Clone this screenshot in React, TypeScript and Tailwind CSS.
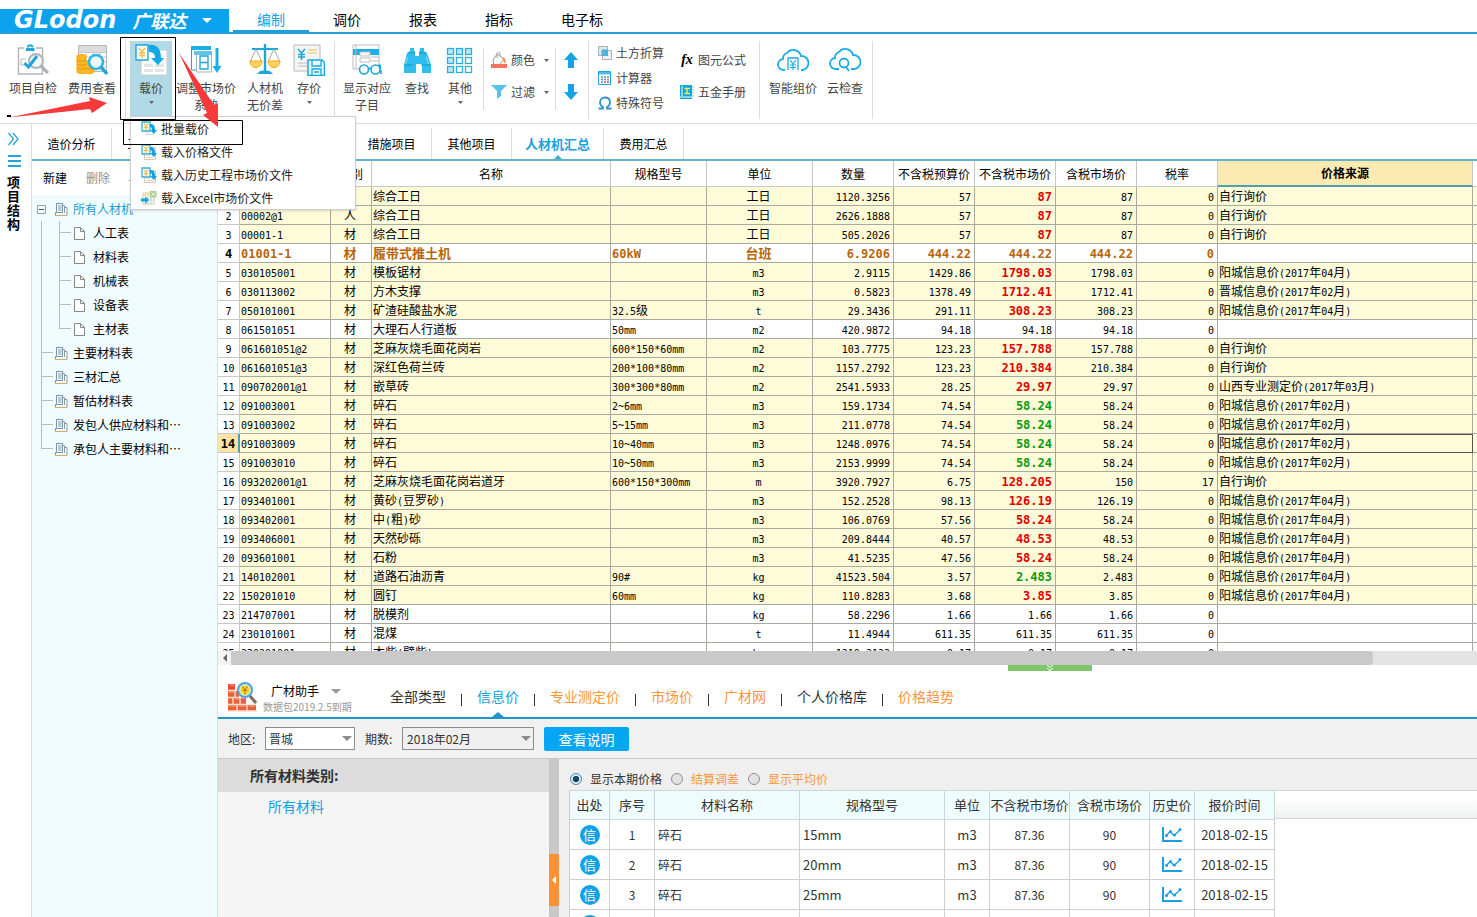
import { useState, type ReactNode } from 'react';
import clsx from 'clsx';

const MAIN_TABS = ['编制', '调价', '报表', '指标', '电子标'];

const PAGE_TABS = ['造价分析', '工程概况', '取费设置', '分部分项', '措施项目', '其他项目', '人材机汇总', '费用汇总'];

const MENU_ITEMS = ['批量载价', '载入价格文件', '载入历史工程市场价文件', '载入Excel市场价文件'];

const TREE_CHILDREN = ['人工表', '材料表', '机械表', '设备表', '主材表'];
const TREE_NODES = ['主要材料表', '三材汇总', '暂估材料表', '发包人供应材料和…', '承包人主要材料和…'];

type Trend = 'up' | 'down' | '';

type Material = {
  code: string;
  kind: string;
  name: string;
  spec: string;
  unit: string;
  qty: string;
  budget: string;
  market: string;
  trend: Trend;
  taxed: string;
  rate: string;
  source: string;
};

function row(
  code: string,
  kind: string,
  name: string,
  spec: string,
  unit: string,
  qty: string,
  budget: string,
  market: string,
  trend: Trend,
  source: string,
  taxed = market,
  rate = '0',
): Material {
  return { code, kind, name, spec, unit, qty, budget, market, trend, taxed, rate, source };
}

const YC4 = '阳城信息价(2017年04月)';
const YC2 = '阳城信息价(2017年02月)';
const SELF = '自行询价';

const MATERIALS: Material[] = [
  row('00001', '人', '综合工日', '', '工日', '1120.3256', '57', '87', 'up', SELF),
  row('00002@1', '人', '综合工日', '', '工日', '2626.1888', '57', '87', 'up', SELF),
  row('00001-1', '材', '综合工日', '', '工日', '505.2026', '57', '87', 'up', SELF),
  row('01001-1', '材', '履带式推土机', '60kW', '台班', '6.9206', '444.22', '444.22', '', ''),
  row('030105001', '材', '模板锯材', '', 'm3', '2.9115', '1429.86', '1798.03', 'up', YC4),
  row('030113002', '材', '方木支撑', '', 'm3', '0.5823', '1378.49', '1712.41', 'up', '晋城信息价(2017年02月)'),
  row('050101001', '材', '矿渣硅酸盐水泥', '32.5级', 't', '29.3436', '291.11', '308.23', 'up', YC4),
  row('061501051', '材', '大理石人行道板', '50mm', 'm2', '420.9872', '94.18', '94.18', '', ''),
  row('061601051@2', '材', '芝麻灰烧毛面花岗岩', '600*150*60mm', 'm2', '103.7775', '123.23', '157.788', 'up', SELF),
  row('061601051@3', '材', '深红色荷兰砖', '200*100*80mm', 'm2', '1157.2792', '123.23', '210.384', 'up', SELF),
  row('090702001@1', '材', '嵌草砖', '300*300*80mm', 'm2', '2541.5933', '28.25', '29.97', 'up', '山西专业测定价(2017年03月)'),
  row('091003001', '材', '碎石', '2~6mm', 'm3', '159.1734', '74.54', '58.24', 'down', YC2),
  row('091003002', '材', '碎石', '5~15mm', 'm3', '211.0778', '74.54', '58.24', 'down', YC2),
  row('091003009', '材', '碎石', '10~40mm', 'm3', '1248.0976', '74.54', '58.24', 'down', YC2),
  row('091003010', '材', '碎石', '10~50mm', 'm3', '2153.9999', '74.54', '58.24', 'down', YC2),
  row('093202001@1', '材', '芝麻灰烧毛面花岗岩道牙', '600*150*300mm', 'm', '3920.7927', '6.75', '128.205', 'up', SELF, '150', '17'),
  row('093401001', '材', '黄砂(豆罗砂)', '', 'm3', '152.2528', '98.13', '126.19', 'up', YC4),
  row('093402001', '材', '中(粗)砂', '', 'm3', '106.0769', '57.56', '58.24', 'up', YC4),
  row('093406001', '材', '天然砂砾', '', 'm3', '209.8444', '40.57', '48.53', 'up', YC4),
  row('093601001', '材', '石粉', '', 'm3', '41.5235', '47.56', '58.24', 'up', YC4),
  row('140102001', '材', '道路石油沥青', '90#', 'kg', '41523.504', '3.57', '2.483', 'down', YC4),
  row('150201010', '材', '圆钉', '60mm', 'kg', '110.8283', '3.68', '3.85', 'up', YC4),
  row('214707001', '材', '脱模剂', '', 'kg', '58.2296', '1.66', '1.66', '', ''),
  row('230101001', '材', '混煤', '', 't', '11.4944', '611.35', '611.35', '', ''),
  row('230201001', '材', '木柴(劈柴)', '', 'kg', '1210.2122', '0.17', '0.17', '', ''),
];

const SELECTED_ROW = 14;
const HIGHLIGHT_ROW = 4;

const HELPER_TABS = [
  { label: '全部类型', tone: 'text-[#333]' },
  { label: '信息价', tone: 'text-[#12a0e4]' },
  { label: '专业测定价', tone: 'text-[#fb963c]' },
  { label: '市场价', tone: 'text-[#fb963c]' },
  { label: '广材网', tone: 'text-[#fb963c]' },
  { label: '个人价格库', tone: 'text-[#333]' },
  { label: '价格趋势', tone: 'text-[#fb963c]' },
];

const PRICE_MODES = ['显示本期价格', '结算调差', '显示平均价'];
const QUOTES = ['15mm', '20mm', '25mm', '30mm'];

/* ---------- icons ---------- */

function IconCheckClipboard() {
  return (
    <svg width="32" height="32" viewBox="0 0 32 32" fill="none">
      <path d="M7 4H1.500v26h24V4H19" stroke="#b5b5b5" strokeWidth="1.400" />
      <path d="M9 6h8.500M11 3.500a2.200 2.200 0 0 1 4.400 0" stroke="#1ba7dc" strokeWidth="2" />
      <path d="M9 4.500h8.500" stroke="#1ba7dc" />
      <path d="M9 15H4v6h5" stroke="#b5b5b5" />
      <circle cx="19" cy="17" r="7" fill="#f3f7f8" stroke="#b0b4b8" strokeWidth="2" />
      <path d="M24 22l7 7" stroke="#b0b4b8" strokeWidth="3.200" />
      <path d="M7.500 19l4 4L20 12" stroke="#1ba7dc" strokeWidth="3" />
    </svg>
  );
}

function IconCostView() {
  return (
    <svg width="32" height="32" viewBox="0 0 32 32" fill="none">
      <path d="M2.500 1.500h28v26h-28z" fill="#fff" stroke="#b8b8b8" />
      <path d="M3 2h27v6H3z" fill="#dcdcdc" />
      <path d="M3 8.500h27M3 13h27M3 18h27M3 23h27M10 8v20M17 8v20M24 8v20" stroke="#c6c6c6" />
      <path d="M1 12c0-2 9-2 9 0v6c0-2 8-1 8 1v9c0 2-8 2-8 1 0 1-9 1-9-1z" fill="#fdb722" stroke="#f5a60a" />
      <path d="M1 16c2 1.500 7 1.500 9 0M1 20c2 1.500 7 1.500 9 0M1 24c2 1.500 7 1.500 9 0M10 24c2 1.500 6 1.500 8 0" stroke="#e8940a" />
      <circle cx="20" cy="18" r="7" fill="#e9f8fd" stroke="#2fb4e6" strokeWidth="2.600" />
      <path d="M25 23l6 7" stroke="#1ba7dc" strokeWidth="3.400" />
    </svg>
  );
}

function IconLoadPrice() {
  return (
    <svg width="32" height="32" viewBox="0 0 32 32" fill="none">
      <path d="M6 6h26v25H6z" fill="#fff" stroke="#c3ccd0" />
      <path d="M9 20h9v3H9zM20 20h9v3h-9zM9 25h9v3H9zM20 25h9v3h-9z" fill="#e4e4e4" />
      <path d="M1 1h12v15H1z" fill="#f8fcfd" stroke="#1ba7dc" strokeWidth="1.400" />
      <path d="M4 4l3 4 3-4M7 8v6M4 9h6M4 11.500h6" stroke="#f9b950" strokeWidth="1.400" />
      <path d="M14 1c8-1 12 4 12 13h3l-6 7-7-7h4c0-4-2-6-6-6z" fill="#12a8e6" />
    </svg>
  );
}

function IconLoadSmall({ framed }: { framed: boolean }) {
  return (
    <svg width="16" height="16" viewBox="0 0 16 16" fill="none">
      {framed ? <path d="M3.500 3.500h11v12h-11z" fill="#fff" stroke="#d9c6a4" /> : null}
      <path d="M5 11h4M5 13.500h8" stroke="#c9d4d8" />
      <path d="M1 1h8v9H1z" fill="#fbf6dc" stroke="#39aedb" strokeWidth="1.300" />
      <path d="M3 3l2 2 2-2M5 5v4M3 6.500h4" stroke="#e8b64a" />
      <path d="M9 3c4 0 5 2 5 6h2l-3 4-4-4h2c0-2-.5-3-2-3z" fill="#12a0dc" />
    </svg>
  );
}

function IconAdjust() {
  return (
    <svg width="32" height="32" viewBox="0 0 32 32" fill="none">
      <path d="M1 2h20v4H1z" fill="#1bb0e4" />
      <path d="M1.500 6v20H6" stroke="#1ba7dc" />
      <path d="M4 7h18v4H4z" fill="#5cc6ea" />
      <path d="M6.500 11v17h15V11" fill="#fff" stroke="#a9b4b8" />
      <path d="M10 12h8v13h-8zM10 18.500h8" stroke="#1ba7dc" strokeWidth="1.300" />
      <path d="M25.500 4h3v18h3L27 29l-4.500-7h3z" fill="#1bb0e4" />
    </svg>
  );
}

function IconScale() {
  return (
    <svg width="32" height="32" viewBox="0 0 32 32" fill="none">
      <path d="M3 5h26" stroke="#1ba7dc" strokeWidth="2" />
      <path d="M16 0v27" stroke="#1ba7dc" strokeWidth="2.400" />
      <path d="M10 28c1-2 11-2 12 0l2 2H8z" fill="#1ba7dc" />
      <path d="M7 5L1 18h12zM25 5l-6 13h12z" stroke="#a8a8a8" />
      <path d="M1 17h12c0 4-3 6.500-6 6.500S1 21 1 17zM19 17h12c0 4-3 6.500-6 6.500S19 21 19 17z" fill="#fdd263" stroke="#f5a60a" />
    </svg>
  );
}

function IconSavePrice() {
  return (
    <svg width="32" height="32" viewBox="0 0 32 32" fill="none">
      <path d="M1 1h26v26H1z" fill="#f5f5f5" stroke="#b8b8b8" />
      <path d="M5 5l3.500 4L12 5M8.500 9v7M5 10.500h7M5 13h7" stroke="#1ba7dc" strokeWidth="1.500" />
      <path d="M15 6h9M15 9h9" stroke="#f0d9a0" strokeWidth="2" />
      <path d="M5 19h9M5 22h9" stroke="#d0d0d0" strokeWidth="1.500" />
      <path d="M15 16h14l2.500 2.500V31.500H15z" fill="#e9f8fd" stroke="#1ba7dc" strokeWidth="1.500" />
      <path d="M19 16v6h9v-6M19 31v-6h9v6M21 28h5" stroke="#1ba7dc" strokeWidth="1.300" />
    </svg>
  );
}

function IconShowItems() {
  return (
    <svg width="32" height="32" viewBox="0 0 32 32" fill="none">
      <path d="M2 1h26v24H2z" fill="#fff" stroke="#bdbdbd" />
      <path d="M2 5h26v6H2z" fill="#1bb0e4" />
      <path d="M5 1v24M9 8h10v4H9zM9 14h10v4H9zM20 13h8M20 17h8" stroke="#bdbdbd" fill="#fff" />
      <circle cx="13" cy="25.500" r="4.500" fill="#fff" stroke="#1ba7dc" strokeWidth="1.600" />
      <circle cx="24.500" cy="25.500" r="4.500" fill="#fff" stroke="#1ba7dc" strokeWidth="1.600" />
      <path d="M17.500 25c.5-1 2-1 2.500 0M29 25c1-3 0-4-1-5M30 26v4" stroke="#1ba7dc" strokeWidth="1.500" />
    </svg>
  );
}

function IconBinoculars() {
  return (
    <svg width="32" height="32" viewBox="0 0 32 32" fill="#2fbdee">
      <path d="M9 4h4v3h1v5h4V7h1V4h4v3l3 2 4 12v8h-9v-9h-6v9H3v-8L6 9l3-2z" />
      <path d="M7 9h7M18 9h7M3 21h9M20 21h10" stroke="#1597cc" />
      <path d="M7 13l-2.500 7M25 13l2.500 7" stroke="#8fdcf5" />
    </svg>
  );
}

function IconGridDots() {
  const at = [4, 13, 22];
  return (
    <svg width="32" height="32" viewBox="0 0 32 32">
      {at.map((y, r) =>
        at.map((x, c) => (
          <rect
            key={`${x}-${y}`}
            x={x - 0.5}
            y={y + 0.5}
            width="6"
            height="6"
            fill={r === 0 || c === 0 ? '#bde6f5' : '#fff'}
            stroke="#2aaede"
            strokeWidth="1.300"
          />
        )),
      )}
    </svg>
  );
}

function IconCloud({ kind }: { kind: 'price' | 'search' }) {
  return (
    <svg width="32" height="32" viewBox="0 0 32 32" fill="none" stroke="#19abe6" strokeWidth="1.800">
      {kind === 'price' ? (
        <>
          <path d="M8 26H7a5.500 5.500 0 0 1-1-11 6 6 0 0 1 4-6 8 8 0 0 1 14 3 7 7 0 0 1 1 14h-1" />
          <path d="M11 26V14h10v12" strokeWidth="1.300" />
          <path d="M13 16l3 4 3-4M16 20v6M13 21h6M13 23.500h6" strokeWidth="1.200" />
        </>
      ) : (
        <>
          <path d="M10 25H7A5.500 5.500 0 0 1 6 14a6 6 0 0 1 4-6 8 8 0 0 1 14 3 7 7 0 0 1 1 14h-3" />
          <circle cx="15" cy="19" r="4.500" />
          <path d="M17 23l3 4" />
        </>
      )}
    </svg>
  );
}

function IconBucket() {
  return (
    <svg width="16" height="16" viewBox="0 0 16 16" fill="none">
      <path d="M6 2l7 5-5 6H3L2 8z" fill="#fff" stroke="#9a9a9a" />
      <path d="M6 6V1.500a1.500 1.500 0 0 1 3 0V4" stroke="#9a9a9a" />
      <path d="M11 5c4 1 4 4 3 7-1-2-2-4-3-7z" fill="#f58a3c" />
      <path d="M0 12h16v4H0z" fill="#f4735a" />
    </svg>
  );
}

function IconFunnel() {
  return (
    <svg width="16" height="16" viewBox="0 0 16 16">
      <path d="M0 1h16l-6 6v5l-4 3V7z" fill="#55c3ea" />
    </svg>
  );
}

function IconMove({ down = false }: { down?: boolean }) {
  return (
    <svg width="16" height="16" viewBox="0 0 16 16" className={clsx(down && 'rotate-180')}>
      <path d="M8 0l7 8h-4v8H5V8H1z" fill="#12a5e6" />
    </svg>
  );
}

function IconEarthwork() {
  return (
    <svg width="14" height="14" viewBox="0 0 14 14" fill="none">
      <path d="M.5.500h9v9h-9z" fill="#dfe7ea" stroke="#a9b4b8" />
      <path d="M4.500 4.500h9v9h-9z" fill="#eef3f4" stroke="#a9b4b8" />
      <path d="M3.500 3.500h6.500v6.500H3.500z" fill="#49b4de" />
    </svg>
  );
}

function IconCalculator() {
  return (
    <svg width="14" height="14" viewBox="0 0 14 14" fill="none">
      <path d="M.5.500h12v13H.5z" fill="#fff" stroke="#1ba7dc" />
      <path d="M1 1h11v2.500H1z" fill="#4fbfe8" />
      <path d="M3 6h2M6 6h2M9 6h2M3 8.500h2M6 8.500h2M9 8.500h2M3 11h2M6 11h2M9 11h2" stroke="#5a8ab4" strokeWidth="1.300" />
      <path d="M9 8.500h2M6 11h2" stroke="#f08a70" strokeWidth="1.300" />
    </svg>
  );
}

function IconOmega() {
  return (
    <svg width="14" height="14" viewBox="0 0 14 14" fill="none" stroke="#2f93cf" strokeWidth="1.800">
      <path d="M.5 12.500H5V11C3 10 2 8.500 2 6.500 2 3.500 4 1.500 7 1.500s5 2 5 5c0 2-1 3.500-3 4.500v1.500h4.500" />
    </svg>
  );
}

function IconManual() {
  return (
    <svg width="14" height="14" viewBox="0 0 14 14" fill="none">
      <path d="M0 0h12v14H0z" fill="#0fa6d8" />
      <path d="M2 1v10M0 12h12" stroke="#fff" />
      <path d="M4.500 3.500h5.500M4.500 8.500h5.500M7 3.500v5" stroke="#f3ee5a" strokeWidth="1.400" />
      <path d="M13 1v12" stroke="#7bcbe6" strokeDasharray="2 1" />
    </svg>
  );
}

function IconExcel() {
  return (
    <svg width="16" height="16" viewBox="0 0 32 32" fill="none">
      <path d="M4 6h22v22H4z" fill="#fff" stroke="#d2c9a8" strokeWidth="2" />
      <path d="M4 6h22v6H4z" fill="#f2e2b8" />
      <path d="M14 12v16M20 12v16M4 20h22" stroke="#c3ccd0" strokeWidth="2" />
      <path d="M18 2h13v13H18z" fill="#a8d08c" />
      <path d="M21 5l7 7M28 5l-7 7" stroke="#fff" strokeWidth="2" />
      <path d="M0 17h8v-5l8 8-8 8v-5H0z" fill="#12a8e0" />
    </svg>
  );
}

function IconSheets() {
  return (
    <svg width="13" height="13" viewBox="0 0 13 13" fill="none">
      <path d="M1.500.500h6v9h-6z" fill="#f6fdff" stroke="#6f93a8" />
      <path d="M3 3h3.500M3 5h3.500M3 7h3.500" stroke="#7795a6" />
      <path d="M8 2.500h1.500V10M10 4.500h2v8H.5V9" stroke="#8a9aa2" />
      <path d="M1 12.500h11" stroke="#d9a86a" />
    </svg>
  );
}

function IconFile() {
  return (
    <svg width="11" height="13" viewBox="0 0 11 13" fill="none" stroke="#868686">
      <path d="M.5.500h6l4 4v8H.5zM6.500.500v4h4" fill="#fff" />
    </svg>
  );
}

function IconBricks() {
  return (
    <svg width="31" height="30" viewBox="0 0 31 30" fill="none">
      <path d="M1 2h7v27H1z" fill="#e2502e" />
      <path d="M1 9h11v7h7v6h10v7H1z" fill="#e9603a" />
      <path d="M1 8.500h7M1 15.500h17M1 22.500h28M8 9v6M13 16v6M6 16v6M10 23v6M20 23v6M1 29h29" stroke="#fbe0cf" strokeWidth="1.400" />
      <path d="M2 3h5M2 10h5M8 17h4M2 24h7M12 24h7M22 24h6" stroke="#f9a27e" />
      <path d="M23 14l6 7" stroke="#7d6a5c" strokeWidth="3" />
      <circle cx="18" cy="8" r="7" fill="#d9ecc0" stroke="#4aa7d8" strokeWidth="2" />
      <circle cx="18" cy="8" r="4.500" fill="#fcd530" />
      <path d="M15.500 4.500l2.500 3.500 2.500-3.500M18 8v4.500M15.500 8.500h5" stroke="#b58410" strokeWidth="1.200" />
    </svg>
  );
}

function IconTrend() {
  return (
    <svg width="20" height="15" viewBox="0 0 20 15" fill="none" stroke="#1c9fe0">
      <path d="M1 0v14h19" strokeWidth="2" />
      <path d="M4 9l4-4.500 4 4 6-5.500" strokeWidth="1.300" />
      <g fill="#1c9fe0" stroke="none">
        <circle cx="4.500" cy="8.500" r="1.500" />
        <circle cx="8.500" cy="4.500" r="1.500" />
        <circle cx="12.500" cy="8" r="1.500" />
        <circle cx="18" cy="2.500" r="1.500" />
      </g>
    </svg>
  );
}

function Caret({ className = 'text-[#666]', wide = false }: { className?: string; wide?: boolean }) {
  return (
    <svg width={wide ? 10 : 5} height={wide ? 5 : 3} viewBox="0 0 10 5" preserveAspectRatio="none" className={className}>
      <path d="M0 0h10L5 5z" fill="currentColor" />
    </svg>
  );
}

/* ---------- toolbar ---------- */

function Divider({ className }: { className?: string }) {
  return <div className={clsx('w-px shrink-0 bg-[#dcdcdc]', className)} />;
}

function ToolButton({
  icon,
  lines,
  width,
  caret = false,
  active = false,
}: {
  icon: ReactNode;
  lines: string[];
  width: string;
  caret?: boolean;
  active?: boolean;
}) {
  return (
    <button
      type="button"
      className={clsx(
        'flex h-[75px] shrink-0 flex-col items-center pt-[3px] text-xs leading-[17px] text-[#444]',
        width,
        active && 'bg-[#b1dae6]',
      )}
    >
      {icon}
      <span className="mt-[3px] flex flex-col items-center whitespace-nowrap">
        {lines.map((line) => (
          <span key={line}>{line}</span>
        ))}
      </span>
      {caret ? <Caret className="mt-[5px] shrink-0 text-[#666]" /> : null}
    </button>
  );
}

function SmallTool({ icon, label }: { icon: ReactNode; label: string }) {
  return (
    <button type="button" className="flex items-center gap-1 text-xs whitespace-nowrap text-[#444]">
      {icon}
      {label}
    </button>
  );
}

function LoadMenu() {
  return (
    <ul className="absolute top-full left-0 z-20 w-[226px] border border-[#cfcfcf] bg-white shadow-sm">
      {MENU_ITEMS.map((item, i) => (
        <li key={item}>
          <button type="button" className="flex h-[23px] w-full items-center gap-1 pl-[10px] text-left text-xs text-[#222]">
            {i === 3 ? <IconExcel /> : <IconLoadSmall framed={i > 0} />}
            {item}
          </button>
        </li>
      ))}
    </ul>
  );
}

function Toolbar() {
  return (
    <div className="flex h-[90px] shrink-0 items-start border-b border-[#dcdcdc] pt-[7px] pl-1">
      <ToolButton icon={<IconCheckClipboard />} lines={['项目自检']} width="w-[58px]" />
      <ToolButton icon={<IconCostView />} lines={['费用查看']} width="w-[60px]" />
      <Divider className="mr-1 ml-[3px] h-[78px]" />
      <div className="relative">
        <ToolButton icon={<IconLoadPrice />} lines={['载价']} width="w-[42px]" caret active />
        <LoadMenu />
      </div>
      <ToolButton icon={<IconAdjust />} lines={['调整市场价', '系数']} width="w-[68px]" />
      <ToolButton icon={<IconScale />} lines={['人材机', '无价差']} width="w-[50px]" />
      <ToolButton icon={<IconSavePrice />} lines={['存价']} width="w-[38px]" caret />
      <Divider className="mx-[6px] h-[78px]" />
      <ToolButton icon={<IconShowItems />} lines={['显示对应', '子目']} width="w-[52px]" />
      <ToolButton icon={<IconBinoculars />} lines={['查找']} width="w-[48px]" />
      <ToolButton icon={<IconGridDots />} lines={['其他']} width="w-[38px]" caret />
      <Divider className="mt-[7px] ml-1 h-[62px]" />
      <div className="flex flex-col gap-4 pt-[11px] pr-[6px] pl-[7px]">
        <div className="flex items-center gap-[9px]">
          <SmallTool icon={<IconBucket />} label="颜色" />
          <Caret />
        </div>
        <div className="flex items-center gap-[9px]">
          <SmallTool icon={<IconFunnel />} label="过滤" />
          <Caret />
        </div>
      </div>
      <Divider className="mt-[7px] h-[62px]" />
      <div className="flex flex-col gap-4 pt-[11px] pr-[9px] pl-[7px]">
        <button type="button" aria-label="上移">
          <IconMove />
        </button>
        <button type="button" aria-label="下移">
          <IconMove down />
        </button>
      </div>
      <Divider className="h-[78px]" />
      <div className="flex flex-col gap-[9px] pt-1 pl-[9px]">
        <SmallTool icon={<IconEarthwork />} label="土方折算" />
        <SmallTool icon={<IconCalculator />} label="计算器" />
        <SmallTool icon={<IconOmega />} label="特殊符号" />
      </div>
      <div className="flex flex-col gap-4 pt-[11px] pr-[13px] pl-4">
        <SmallTool
          icon={<span className="w-[14px] font-['Liberation_Serif'] text-sm leading-4 font-bold text-black italic">fx</span>}
          label="图元公式"
        />
        <SmallTool icon={<IconManual />} label="五金手册" />
      </div>
      <Divider className="mr-[5px] h-[78px]" />
      <ToolButton icon={<IconCloud kind="price" />} lines={['智能组价']} width="w-[56px]" />
      <ToolButton icon={<IconCloud kind="search" />} lines={['云检查']} width="w-[48px]" />
      <Divider className="ml-[3px] h-[78px]" />
    </div>
  );
}

function TitleBar() {
  return (
    <header className="flex h-[34px] shrink-0 items-end border-b-2 border-[#1f9fd9]">
      <div className="flex h-[23px] w-[229px] items-center bg-[#0ca2ee] pl-[14px] text-white">
        <span className="font-['DejaVu_Sans'] text-2xl leading-[23px] font-bold italic">GLodon</span>
        <span className="ml-4 text-lg leading-[23px] font-bold italic">广联达</span>
        <Caret className="ml-4 text-white" wide />
      </div>
      <nav className="flex pl-1">
        {MAIN_TABS.map((tab, i) => (
          <button
            key={tab}
            type="button"
            className={clsx(
              'h-6 border-b-2 px-6 text-sm leading-5 whitespace-nowrap',
              i === 0 ? 'border-[#1f9fd9] text-[#12a0e4]' : 'border-transparent text-black',
            )}
          >
            {tab}
          </button>
        ))}
      </nav>
    </header>
  );
}

/* ---------- left side ---------- */

function Rail() {
  return (
    <aside className="flex w-8 shrink-0 flex-col items-start border-r border-[#dcdcdc] pt-2 pl-[7px]">
      <svg width="14" height="14" viewBox="0 0 14 14" fill="none" stroke="#2ba3d4" strokeWidth="1.300">
        <path d="M1.500 1l5 6-5 6M6 1l5 6-5 6" />
      </svg>
      <svg width="14" height="12" viewBox="0 0 14 12" className="mt-[9px] ml-px" stroke="#2ba3d4" strokeWidth="2">
        <path d="M0 1h13M0 6h13M0 11h13" />
      </svg>
      <div className="mt-2 w-[13px] text-[13px] leading-[14px] font-bold text-black">项目结构</div>
    </aside>
  );
}

function Branch({ last }: { last: boolean }) {
  return (
    <span className="flex h-6 w-3 shrink-0 flex-col">
      <span className="h-3 border-b border-l border-[#b4bcbe]" />
      <span className={clsx('h-3', !last && 'border-l border-[#b4bcbe]')} />
    </span>
  );
}

function Tree() {
  return (
    <aside className="flex w-[186px] shrink-0 flex-col border-r border-[#d5e0e2]">
      <div className="flex h-[34px] shrink-0 items-center gap-[19px] pl-[11px] text-xs">
        <button type="button">新建</button>
        <button type="button" className="text-[#909090]">
          删除
        </button>
        <svg width="10" height="6" viewBox="0 0 10 6" fill="none" stroke="#909090">
          <path d="M0 6l5-5 5 5" />
        </svg>
      </div>
      <ul className="flex-1 bg-[#f0fcfe] pt-[2px] text-xs text-black">
        <li>
          <div className="flex h-6 items-center pl-[5px]">
            <svg width="9" height="9" viewBox="0 0 9 9" fill="none">
              <path d="M.5.500h8v8h-8z" stroke="#8fa3aa" />
              <path d="M2 4.500h5" stroke="#555" />
            </svg>
            <span className="mr-[5px] ml-[9px]">
              <IconSheets />
            </span>
            <a href="#all" className="text-[#1b9bd0]">
              所有人材机
            </a>
          </div>
          <ul>
            {TREE_CHILDREN.map((name, i) => (
              <li key={name} className="ml-[9px] flex h-6 items-center">
                <span className="h-6 w-[18px] border-l border-[#b4bcbe]" />
                <Branch last={i === TREE_CHILDREN.length - 1} />
                <span className="mr-2 ml-[3px]">
                  <IconFile />
                </span>
                <a href="#kind">{name}</a>
              </li>
            ))}
          </ul>
        </li>
        {TREE_NODES.map((name, i) => (
          <li key={name} className="ml-[9px] flex h-6 items-center">
            <Branch last={i === TREE_NODES.length - 1} />
            <span className="mr-[5px] ml-[2px]">
              <IconSheets />
            </span>
            <a href="#node">{name}</a>
          </li>
        ))}
      </ul>
    </aside>
  );
}

function PageTabs() {
  return (
    <nav className="flex h-[37px] shrink-0 items-end border-b-2 border-[#5fb4c6]">
      {PAGE_TABS.map((tab) => {
        const active = tab === '人材机汇总';
        return (
          <button
            key={tab}
            type="button"
            className={clsx(
              'relative h-[31px] border-r border-[#dcdcdc] whitespace-nowrap',
              active ? 'w-[92px] text-[13px] font-bold text-[#1ba3dc]' : 'w-20 text-xs text-black',
            )}
          >
            {tab}
            {active ? (
              <svg width="8" height="4" viewBox="0 0 8 4" className="absolute bottom-0 left-[42px]">
                <path d="M0 4l4-4 4 4z" fill="#3fb0d4" />
              </svg>
            ) : null}
          </button>
        );
      })}
    </nav>
  );
}

/* ---------- material grid ---------- */

// Latin runs are set in the half-width mono face next to full-width hanzi
function GridText({ text, bold = false }: { text: string; bold?: boolean }) {
  const runs = text.split(/([\x20-\x7e]+)/).filter(Boolean);
  return (
    <>
      {runs.map((run, i) =>
        /^[\x20-\x7e]+$/.test(run) ? (
          <span
            key={i}
            className={clsx("font-['DejaVu_Sans_Mono'] leading-none", bold ? 'text-[12px] font-bold' : 'text-[10px]')}
          >
            {run}
          </span>
        ) : (
          <span key={i} className={clsx('leading-none', bold && 'text-[13px] font-bold')}>
            {run}
          </span>
        ),
      )}
    </>
  );
}

const GRID_HEADS = ['', '编码', '类别', '名称', '规格型号', '单位', '数量', '不含税预算价', '不含税市场价', '含税市场价', '税率', '价格来源'];

function MaterialGrid() {
  return (
    <div className="min-h-0 flex-1 overflow-hidden">
      <table className="w-full table-fixed border-separate border-spacing-0 text-xs leading-[18px] text-black">
        <colgroup>
          <col className="w-[22px]" />
          <col className="w-[91px]" />
          <col className="w-[41px]" />
          <col className="w-[239px]" />
          <col className="w-[96px]" />
          <col className="w-[106px]" />
          <col className="w-[81px]" />
          <col className="w-[81px]" />
          <col className="w-[81px]" />
          <col className="w-[81px]" />
          <col className="w-[81px]" />
          <col className="w-[255px]" />
          <col />
        </colgroup>
        <thead>
          <tr>
            {GRID_HEADS.map((head) => (
              <th
                key={head}
                className={clsx(
                  'h-[26px] border-r p-0 whitespace-nowrap',
                  head === '价格来源'
                    ? 'border-b-2 border-r-[#c8c8c8] border-b-[#4f9fae] bg-[#fdeab2] font-bold'
                    : 'border-b border-[#c8c8c8] font-normal',
                )}
              >
                {head}
              </th>
            ))}
            <th className="border-b border-[#c8c8c8] p-0" />
          </tr>
        </thead>
        <tbody>
          {MATERIALS.map((m, i) => {
            const n = i + 1;
            const strong = n === HIGHLIGHT_ROW;
            const picked = n === SELECTED_ROW;
            const cell = 'h-[19px] border-r border-b border-[#a9a9a2] py-0 pr-[3px] pl-px whitespace-nowrap';
            return (
              <tr key={m.code} className={clsx(m.source !== '' && 'bg-[#fdfbd8]', strong && 'text-[#b8660c]')}>
                <th
                  scope="row"
                  className={clsx(
                    'h-[19px] border-r border-b border-[#c8c8c8] p-0 font-normal text-black',
                    picked ? 'border-r-2 border-r-[#4f9fae] bg-[#fde3a4]' : 'bg-white',
                  )}
                >
                  <GridText text={String(n)} bold={strong || picked} />
                </th>
                <td className={cell}>
                  <GridText text={m.code} bold={strong} />
                </td>
                <td className={clsx(cell, 'text-center')}>
                  <GridText text={m.kind} bold={strong} />
                </td>
                <td className={cell}>
                  <GridText text={m.name} bold={strong} />
                </td>
                <td className={cell}>
                  <GridText text={m.spec} bold={strong} />
                </td>
                <td className={clsx(cell, 'text-center')}>
                  <GridText text={m.unit} bold={strong} />
                </td>
                <td className={clsx(cell, 'text-right')}>
                  <GridText text={m.qty} bold={strong} />
                </td>
                <td className={clsx(cell, 'text-right')}>
                  <GridText text={m.budget} bold={strong} />
                </td>
                <td
                  className={clsx(
                    cell,
                    'text-right',
                    m.trend === 'up' && 'text-[#e00000]',
                    m.trend === 'down' && 'text-[#0b9a10]',
                  )}
                >
                  <GridText text={m.market} bold={strong || m.trend !== ''} />
                </td>
                <td className={clsx(cell, 'text-right')}>
                  <GridText text={m.taxed} bold={strong} />
                </td>
                <td className={clsx(cell, 'text-right')}>
                  <GridText text={m.rate} bold={strong} />
                </td>
                <td className={clsx(cell, picked && 'outline outline-[#555] -outline-offset-1')}>
                  <GridText text={m.source} />
                </td>
                <td className="border-b border-[#a9a9a2] p-0" />
              </tr>
            );
          })}
        </tbody>
      </table>
    </div>
  );
}

function GridScrollbar() {
  return (
    <div className="flex h-[14px] shrink-0 bg-[#e3e3e3]">
      <button type="button" aria-label="向左滚动" className="flex w-[13px] items-center justify-center bg-[#f4f4f4]">
        <svg width="4" height="8" viewBox="0 0 4 8">
          <path d="M4 0v8L0 4z" fill="#666" />
        </svg>
      </button>
      <div className="flex-1">
        <div className="h-full w-11/12 rounded-r-sm bg-[#c9c9c9]" />
      </div>
    </div>
  );
}

/* ---------- price helper ---------- */

function HelperHeader() {
  return (
    <div className="relative flex h-[54px] shrink-0 border-b-2 border-[#1f96c8] bg-white pt-[17px] pl-[9px]">
      <button
        type="button"
        aria-label="收起"
        className="absolute top-0 left-[62.75%] flex h-1.5 w-[84px] items-center justify-center bg-[#7fc66b]"
      >
        <svg width="8" height="6" viewBox="0 0 8 6" fill="none" stroke="#fff">
          <path d="M1 0l3 2.500L7 0M1 3l3 2.500L7 3" />
        </svg>
      </button>
      <IconBricks />
      <div className="w-[114px] pl-[5px]">
        <div className="flex items-center gap-3 pl-2 text-xs leading-[18px] text-black">
          广材助手
          <Caret className="text-[#999]" wide />
        </div>
        <div className="text-[10px] leading-[14px] whitespace-nowrap text-[#999]">数据包2019.2.5到期</div>
      </div>
      <nav className="flex gap-[15px] pl-[18px]">
        {HELPER_TABS.map((tab, i) => (
          <div key={tab.label} className="flex gap-[15px]">
            {i > 0 ? <span className="mt-3 h-3 w-px bg-[#333]" /> : null}
            <button
              type="button"
              className={clsx('relative flex h-full pt-[3px] text-sm leading-[22px] whitespace-nowrap', tab.tone)}
            >
              {tab.label}
              {tab.label === '信息价' ? (
                <svg width="12" height="5" viewBox="0 0 12 5" className="absolute bottom-0 left-[15px]">
                  <path d="M0 5l6-5 6 5z" fill="#1f96c8" />
                </svg>
              ) : null}
            </button>
          </div>
        ))}
      </nav>
    </div>
  );
}

function PickBox({ id, label, value, className }: { id: string; label: string; value: string; className: string }) {
  return (
    <div className="flex items-center">
      <label htmlFor={id} className="w-[37px]">
        {label}
      </label>
      <div className="relative flex items-center">
        <select
          id={id}
          defaultValue={value}
          className={clsx('h-[23px] appearance-none border border-[#8c8c8c] leading-5 text-[#333]', className)}
        >
          <option>{value}</option>
        </select>
        <Caret className="pointer-events-none absolute right-[3px] text-[#8c8c8c]" wide />
      </div>
    </div>
  );
}

function HelperFilter() {
  return (
    <div className="flex h-10 shrink-0 items-center gap-[10px] border-b border-[#c9c9c9] bg-[#f1f1f1] pl-[10px] text-xs text-[#333]">
      <PickBox id="area" label="地区:" value="晋城" className="w-[90px] bg-white pl-[3px]" />
      <PickBox id="period" label="期数:" value="2018年02月" className="w-[132px] bg-[#efefef] pl-1" />
      <button type="button" className="h-6 w-[85px] rounded-xs bg-[#06a7f2] text-sm leading-6 text-white">
        查看说明
      </button>
    </div>
  );
}

const QUOTE_HEADS = ['出处', '序号', '材料名称', '规格型号', '单位', '不含税市场价', '含税市场价', '历史价', '报价时间'];

function QuoteTable() {
  const cell = 'h-[30px] border-r border-b border-[#cfcfcf] p-0 text-center';
  return (
    <table className="w-[705px] shrink-0 table-fixed border-separate border-spacing-0 border-l border-[#cfcfcf] bg-white text-[13px] leading-5 text-[#333]">
      <colgroup>
        <col className="w-10" />
        <col className="w-[45px]" />
        <col className="w-[145px]" />
        <col className="w-[145px]" />
        <col className="w-[45px]" />
        <col className="w-20" />
        <col className="w-20" />
        <col className="w-[45px]" />
        <col className="w-20" />
      </colgroup>
      <thead>
        <tr>
          {QUOTE_HEADS.map((head) => (
            <th
              key={head}
              className="h-[30px] border-t border-r border-b border-[#cfd6d6] bg-[#effcfe] p-0 font-normal whitespace-nowrap"
            >
              {head}
            </th>
          ))}
        </tr>
      </thead>
      <tbody>
        {QUOTES.map((size, i) => (
          <tr key={size}>
            <td className={cell}>
              <span className="mx-auto flex size-5 items-center justify-center rounded-full bg-[#0ea2e8] text-white">
                信
              </span>
            </td>
            <td className={clsx(cell, 'text-xs')}>{i + 1}</td>
            <td className={clsx(cell, 'pl-[3px] text-left text-xs')}>碎石</td>
            <td className={clsx(cell, 'pl-[3px] text-left')}>{size}</td>
            <td className={cell}>m3</td>
            <td className={clsx(cell, 'text-xs')}>87.36</td>
            <td className={clsx(cell, 'text-xs')}>90</td>
            <td className={cell}>
              <div className="flex justify-center">
                <IconTrend />
              </div>
            </td>
            <td className={cell}>2018-02-15</td>
          </tr>
        ))}
      </tbody>
    </table>
  );
}

function HelperBody() {
  const [mode, setMode] = useState(PRICE_MODES[0]);
  return (
    <div className="flex min-h-0 flex-1">
      <div className="w-[331px] shrink-0 bg-[#f5f5f5]">
        <div className="h-[33px] bg-[#dcdcdc] pl-8 text-sm leading-8 font-bold text-[#333]">所有材料类别:</div>
        <a href="#materials" className="block pt-[2px] pl-[50px] text-sm leading-6 text-[#12a0e4]">
          所有材料
        </a>
      </div>
      <div className="w-[10px] shrink-0 bg-[#c8c8c8] pt-[95px]">
        <button type="button" aria-label="折叠" className="flex h-[52px] w-full items-center justify-center bg-[#fb9235]">
          <svg width="4" height="8" viewBox="0 0 4 8">
            <path d="M4 0v8L0 4z" fill="#fff" />
          </svg>
        </button>
      </div>
      <div className="flex min-w-0 flex-1 flex-col overflow-hidden bg-[#efefef]">
        <div className="flex h-[31px] shrink-0 items-center gap-[9px] pt-2 pl-[11px] text-xs">
          {PRICE_MODES.map((name, i) => (
            <label key={name} className={clsx('flex items-center gap-2', i === 0 ? 'text-[#333]' : 'text-[#fb963c]')}>
              <input
                type="radio"
                name="mode"
                checked={mode === name}
                onChange={() => setMode(name)}
                className="size-3 appearance-none rounded-full border border-[#8e8f8f] bg-[#e2e2e2] checked:border-[#5586a3] checked:bg-[radial-gradient(circle,#0f4a66_40%,#d7ecf5_50%)]"
              />
              {name}
            </label>
          ))}
        </div>
        <div className="flex flex-1 items-start pl-[10px]">
          <QuoteTable />
          <div className="h-full flex-1 bg-white">
            <div className="h-[29px] border-t border-b border-[#d4d4d4] bg-linear-to-b from-white from-30% to-[#eff0f1]" />
          </div>
        </div>
      </div>
    </div>
  );
}

/* ---------- red pointers and frames over the toolbar ---------- */

function Callouts() {
  return (
    <svg width="250" height="150" viewBox="0 0 250 150" className="pointer-events-none absolute top-0 left-0 z-30" fill="none">
      <path d="M120.500 37.500h55v82h-55zM123.500 120.500h119v24h-119z" stroke="#000" />
      <path d="M7 115h4v2H7z" fill="#000" />
      <path d="M9 117.500L90 109l2 4 15-10-18-6 1 4z" fill="#f8393a" />
      <path d="M179 53l35 52 4-2v24l-15-12 4-2z" fill="#f8393a" />
    </svg>
  );
}

export default function App() {
  return (
    <div className="relative flex h-screen flex-col overflow-hidden bg-white font-['Noto_Sans_CJK_SC',sans-serif]">
      <TitleBar />
      <Toolbar />
      <div className="flex min-h-0 flex-1">
        <Rail />
        <div className="flex min-w-0 flex-1 flex-col">
          <PageTabs />
          <div className="flex min-h-0 flex-1">
            <Tree />
            <main className="flex min-w-0 flex-1 flex-col">
              <MaterialGrid />
              <GridScrollbar />
              <section className="flex h-[252px] shrink-0 flex-col">
                <HelperHeader />
                <HelperFilter />
                <HelperBody />
              </section>
            </main>
          </div>
        </div>
      </div>
      <Callouts />
    </div>
  );
}
